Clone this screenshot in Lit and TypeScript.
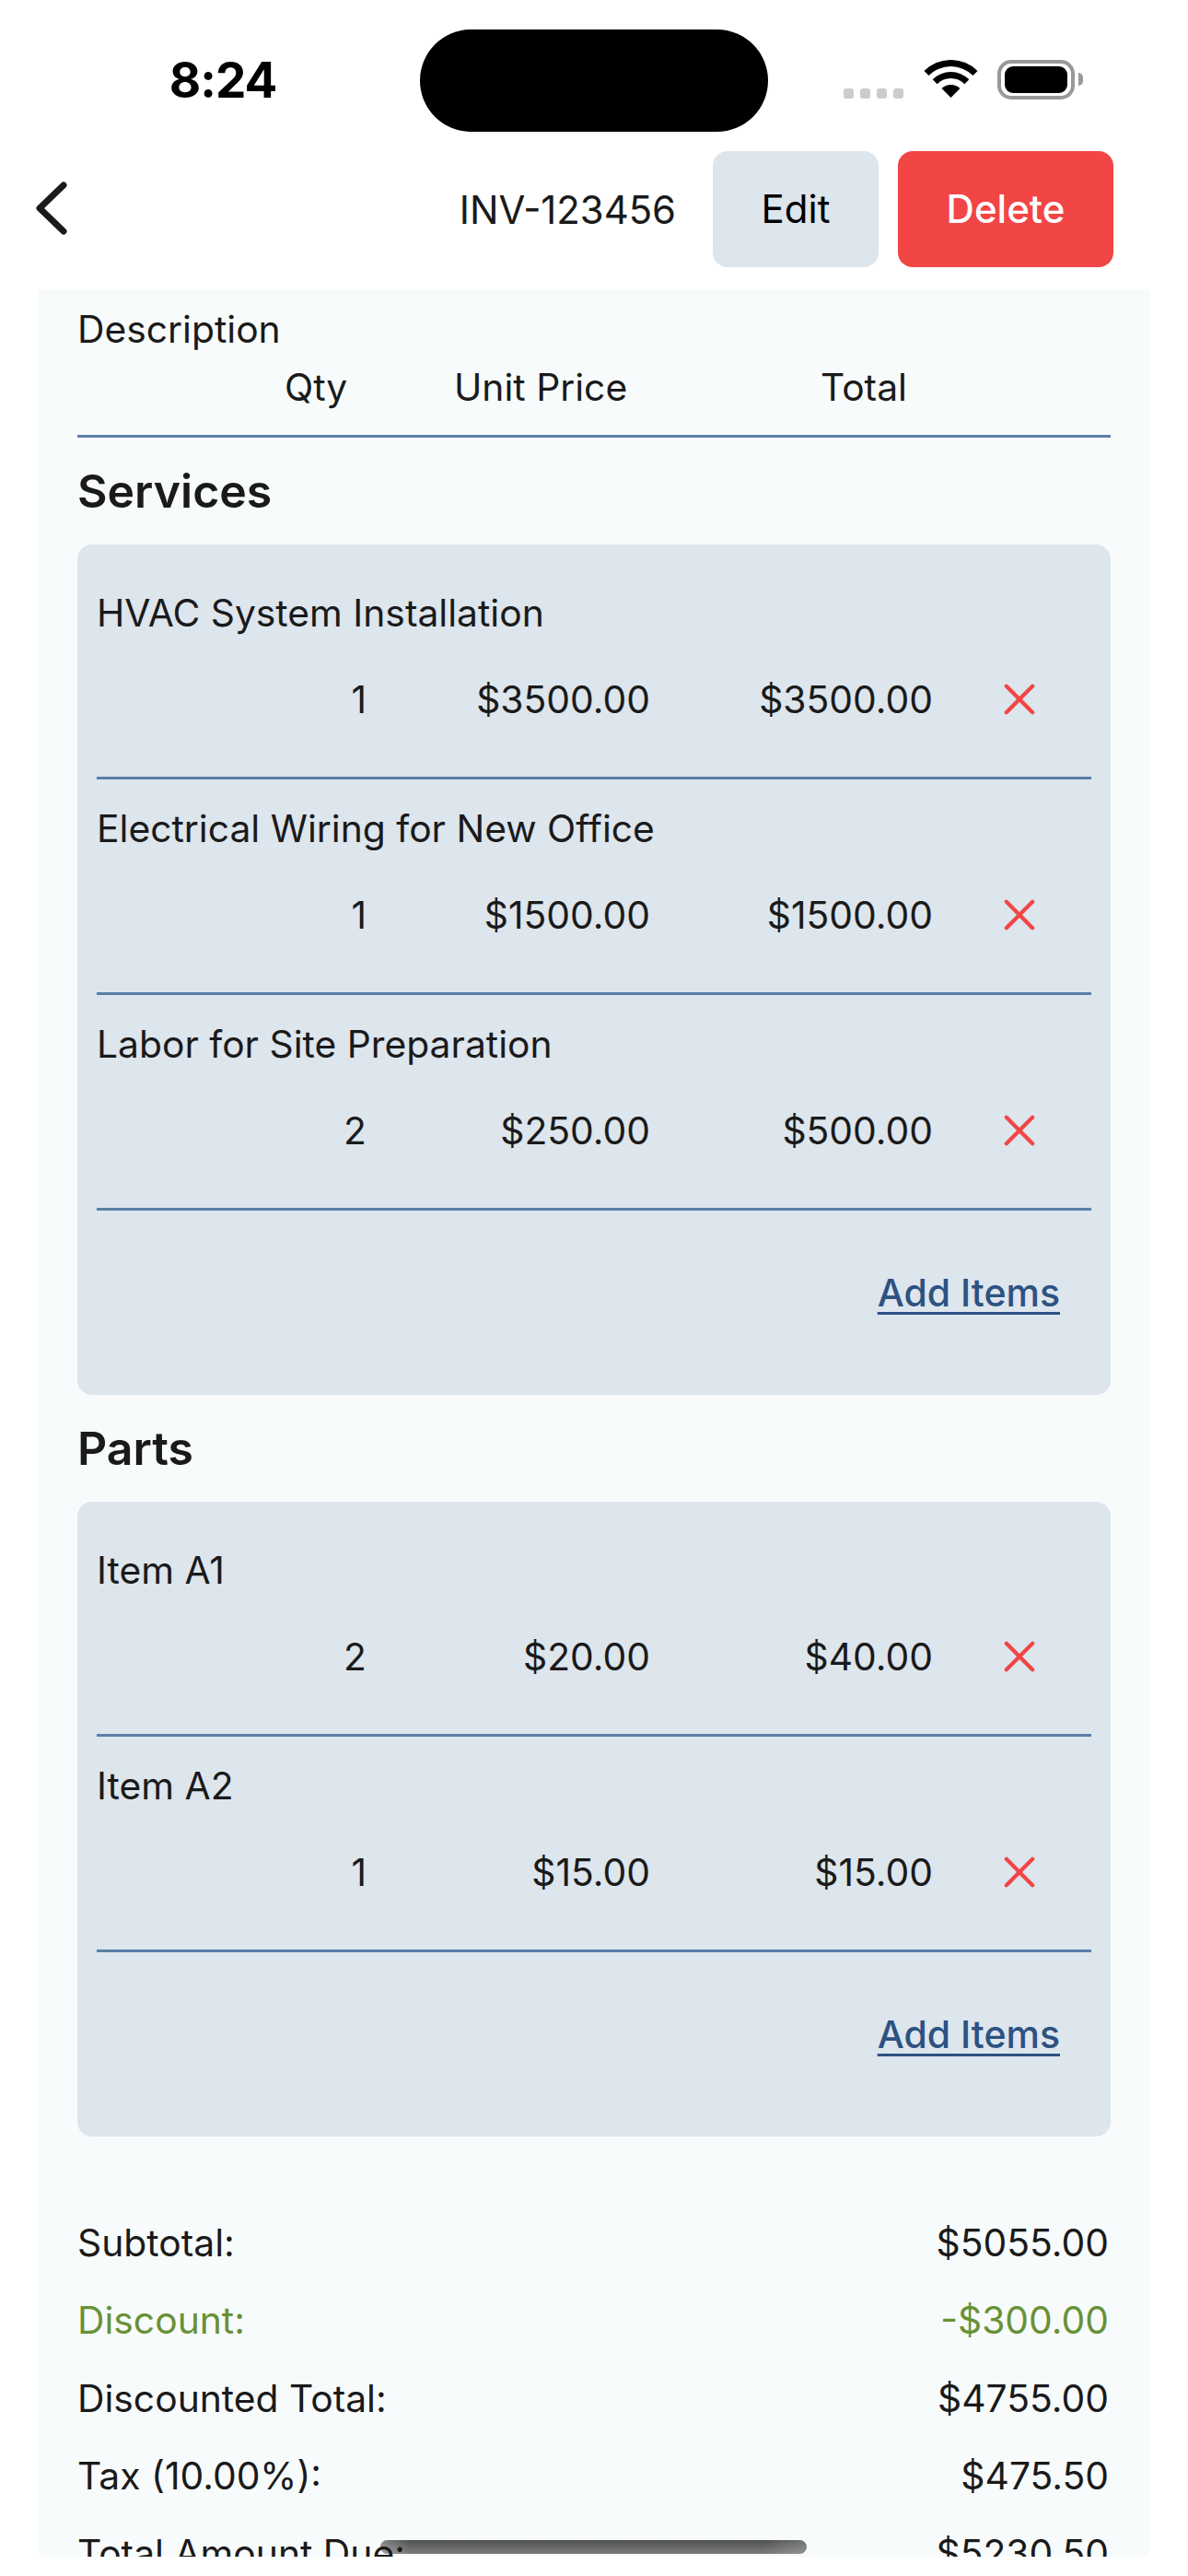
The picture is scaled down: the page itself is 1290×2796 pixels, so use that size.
import { LitElement, html, css, svg } from 'lit';
import { customElement } from 'lit/decorators.js';

const services = [
  { name: 'HVAC System Installation', qty: 1, price: '$3500.00', total: '$3500.00' },
  { name: 'Electrical Wiring for New Office', qty: 1, price: '$1500.00', total: '$1500.00' },
  { name: 'Labor for Site Preparation', qty: 2, price: '$250.00', total: '$500.00' },
];

const parts = [
  { name: 'Item A1', qty: 2, price: '$20.00', total: '$40.00' },
  { name: 'Item A2', qty: 1, price: '$15.00', total: '$15.00' },
];

const totals = [
  { label: 'Subtotal:', value: '$5055.00' },
  { label: 'Discount:', value: '-$300.00', green: true },
  { label: 'Discounted Total:', value: '$4755.00' },
  { label: 'Tax (10.00%):', value: '$475.50' },
  { label: 'Total Amount Due:', value: '$5230.50' },
];

const wifi = svg`<path d="M-.5 12A41 41 0 0 1 57.5 12L52.5 17A34 34 0 0 0 4.5 17Z"/><path d="M8.7 21.2A28 28 0 0 1 48.3 21.2L43.35 26.15A21 21 0 0 0 13.65 26.15Z"/><path d="M18.6 31.1A14 14 0 0 1 38.4 31.1L28.5 41Z"/>`;

@customElement('app-root')
export class AppRoot extends LitElement {
  static styles = css`
    :host {
      display: block;
      width: 1290px;
      height: 2796px;
      overflow: hidden;
      background: #fff;
      color: #1a1a1a;
      font-family: Inter, 'Liberation Sans', sans-serif;
      font-size: 40.8px;
      line-height: 62px;
    }
    .status {
      height: 164px;
      display: grid;
      grid-template-columns: 456px 378px 1fr;
      box-sizing: border-box;
      padding-top: 32px;
    }
    .time {
      height: 111px;
      display: flex;
      align-items: center;
      justify-content: center;
      padding-left: 58px;
      font-size: 53px;
      font-weight: 700;
      letter-spacing: -1px;
      color: #000;
      line-height: 1;
      box-sizing: border-box;
      width: 426px;
    }
    .island {
      height: 111px;
      background: #000;
      border-radius: 56px;
    }
    .indicators {
      display: flex;
      align-items: flex-start;
      padding: 33px 0 0 82px;
    }
    .dots {
      display: flex;
      gap: 7px;
      margin-top: 31px;
    }
    .dots span {
      width: 11px;
      height: 11px;
      border-radius: 3px;
      background: #ccc;
    }
    .wifi {
      margin-left: 22px;
      width: 59px;
      height: 42px;
      fill: #000;
    }
    .battery {
      margin-left: 21px;
      width: 84px;
      height: 43px;
      box-sizing: border-box;
      border: 4px solid #999;
      border-radius: 15px;
      padding: 3px 4px;
      background: #fff;
    }
    .battery div {
      height: 100%;
      background: #000;
      border-radius: 9px;
    }
    .nub {
      width: 5px;
      height: 14px;
      margin: 14px 0 0 4px;
      background: #999;
      border-radius: 0 7px 7px 0;
    }
    .nav {
      height: 126px;
      display: flex;
      align-items: center;
      padding: 0 81px 0 38px;
    }
    .back {
      width: 38px;
      height: 62px;
      fill: none;
      stroke: #1a1a1a;
      stroke-width: 7;
      stroke-linecap: round;
      stroke-linejoin: round;
    }
    .inv {
      margin-left: auto;
      margin-right: 40px;
      padding-top: 2px;
      font-size: 41.8px;
    }
    .btn {
      height: 126px;
      display: flex;
      align-items: center;
      justify-content: center;
      border-radius: 16px;
      font-size: 42px;
    }
    .edit {
      width: 180px;
      background: #dde5ed;
      color: #000;
      font-weight: 400;
    }
    .delete {
      width: 234px;
      margin-left: 21px;
      background: #f24545;
      color: #fff;
      font-weight: 500;
    }
    .panel {
      position: relative;
      margin: 24px 42px 0;
      height: 2461px;
      box-sizing: border-box;
      padding: 12px 42px 0;
      background: #f8fbfc;
      overflow: hidden;
    }
    .head {
      display: grid;
      grid-template-columns: 225px 184px 398px 1fr;
      padding-top: 1px;
      padding-bottom: 21px;
      border-bottom: 3px solid #5a7fa8;
    }
    h2 {
      margin: 22px 0;
      font-size: 50px;
      line-height: 72px;
      font-weight: 600;
    }
    .card {
      padding: 21px 21px 0;
      background: #dde5ed;
      border-radius: 16px;
    }
    .item {
      padding: 22px 0 53px;
      border-bottom: 3px solid #5a7fa8;
    }
    .values {
      display: grid;
      grid-template-columns: 293px 308px 307px 1fr;
      margin-top: 32px;
      text-align: right;
      align-items: center;
    }
    .remove {
      width: 34px;
      height: 34px;
      margin-left: 77px;
      fill: none;
      stroke: #f24545;
      stroke-width: 4.5;
      stroke-linecap: round;
    }
    .add {
      padding: 58px 34px 80px 0;
      text-align: right;
    }
    .add a {
      color: #2c5282;
      font-size: 41px;
      font-weight: 500;
      text-decoration: underline;
      text-decoration-thickness: 3px;
      text-underline-offset: 6px;
    }
    .totals {
      position: relative;
      z-index: 1;
      display: grid;
      row-gap: 22.3px;
      margin-top: 84px;
      padding-right: 2px;
    }
    .line {
      display: flex;
      justify-content: space-between;
    }
    .green {
      color: #689136;
    }
    .home {
      position: absolute;
      left: 371px;
      top: 2443px;
      width: 463px;
      height: 15px;
      border-radius: 8px;
      background:
        linear-gradient(90deg, rgba(248, 251, 252, 0.3), transparent 7%, transparent 90%, rgba(248, 251, 252, 0.2)),
        linear-gradient(#505050, #7c7c7c);
    }
  `;

  renderItem(item) {
    return html`
      <div class="item">
        <div>${item.name}</div>
        <div class="values">
          <span>${item.qty}</span>
          <span>${item.price}</span>
          <span>${item.total}</span>
          <svg class="remove" viewBox="0 0 36 36"><path d="M3 3L33 33M33 3L3 33" /></svg>
        </div>
      </div>
    `;
  }

  renderCard(items) {
    return html`
      <div class="card">
        ${items.map((item) => this.renderItem(item))}
        <div class="add"><a>Add Items</a></div>
      </div>
    `;
  }

  render() {
    return html`
      <div class="status">
        <div class="time">8:24</div>
        <div class="island"></div>
        <div class="indicators">
          <div class="dots"><span></span><span></span><span></span><span></span></div>
          <svg class="wifi" viewBox="-1 0 59 42">${wifi}</svg>
          <div class="battery"><div></div></div>
          <div class="nub"></div>
        </div>
      </div>
      <div class="nav">
        <svg class="back" viewBox="0 0 38 62"><path d="M31 5L5 30L31 55" /></svg>
        <span class="inv">INV-123456</span>
        <div class="btn edit">Edit</div>
        <div class="btn delete">Delete</div>
      </div>
      <div class="panel">
        <div>Description</div>
        <div class="head">
          <span></span>
          <span>Qty</span>
          <span>Unit Price</span>
          <span>Total</span>
        </div>
        <h2>Services</h2>
        ${this.renderCard(services)}
        <h2>Parts</h2>
        ${this.renderCard(parts)}
        <div class="totals">
          ${totals.map(
            (row) => html`
              <div class="line ${row.green ? 'green' : ''}">
                <span>${row.label}</span>
                <span>${row.value}</span>
              </div>
            `
          )}
        </div>
        <div class="home"></div>
      </div>
    `;
  }
}
